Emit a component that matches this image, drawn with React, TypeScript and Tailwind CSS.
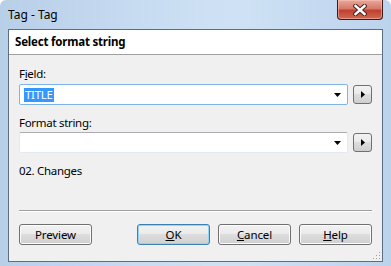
import React from "react";

const font = { fontFamily: '"Noto Sans", "Open Sans", sans-serif' };

function Arrow() {
  return (
    <svg width="7" height="4" viewBox="0 0 7 4">
      <path d="M0 0 H7 L3.5 4 Z" fill="#000" />
    </svg>
  );
}

function Combo({ focused, children }: { focused?: boolean; children?: React.ReactNode }) {
  return (
    <div
      className={
        "flex items-center w-[330px] h-[21px] bg-white border rounded-[2px] " +
        (focused
          ? "border-[#7eb4ea]"
          : "border-[#e3e9ef] border-t-[#abadb3]")
      }
    >
      <div className="flex-1 pl-[4px] flex items-center">{children}</div>
      <div className="w-[17px] flex items-center justify-center pr-[3px]">
        <Arrow />
      </div>
    </div>
  );
}

function SmallBtn() {
  return (
    <div className="w-[19px] h-[19px] border border-[#707070] rounded-[3px] bg-[linear-gradient(#f2f2f2_0%,#ebebeb_45%,#dddddd_50%,#cfcfcf_100%)] flex items-center justify-center">
      <svg width="4" height="7" viewBox="0 0 4 7">
        <path d="M0 0 L4 3.5 L0 7 Z" fill="#000" />
      </svg>
    </div>
  );
}

function Btn({ children, focused }: { children: React.ReactNode; focused?: boolean }) {
  return (
    <div
      className={
        "w-[73px] h-[21px] rounded-[3px] border flex items-center justify-center text-[11.5px] tracking-[-0.1px] text-black bg-[linear-gradient(#f2f2f2_0%,#ebebeb_45%,#dddddd_50%,#cfcfcf_100%)] " +
        (focused
          ? "border-[#3c7fb1] shadow-[inset_0_0_0_1px_#94d4f5]"
          : "border-[#707070] shadow-[inset_0_0_0_1px_#fcfcfc]")
      }
    >
      {children}
    </div>
  );
}

export default function App() {
  return (
    <div
      className="w-[391px] h-[266px] flex flex-col bg-[linear-gradient(90deg,#b8cfe8_0%,#c9ddf2_40%,#cfe2f5_60%,#bcd3ec_100%)] rounded-t-[6px] overflow-hidden"
      style={font}
    >
      <div className="h-[29px] flex items-start justify-between pl-[8px] pr-[8px]">
        <div className="text-[12px] text-black mt-[7px] leading-[16px]">Tag - Tag</div>
        <div className="w-[46px] h-[20px] rounded-b-[4px] border border-t-0 border-[#3b1c18] bg-[linear-gradient(#e9a99a_0%,#d6796a_45%,#c1412f_55%,#cf6a52_100%)] shadow-[inset_0_0_0_1px_rgba(255,200,190,0.5)] flex items-center justify-center">
          <svg width="14" height="12" viewBox="0 0 14 12">
            <path d="M2.5 2 L11.5 10 M11.5 2 L2.5 10" stroke="#4a2520" strokeWidth="4.4" strokeLinecap="square" />
            <path d="M2.5 2 L11.5 10 M11.5 2 L2.5 10" stroke="#fff" strokeWidth="2.4" strokeLinecap="square" />
          </svg>
        </div>
      </div>
      <div className="mx-[8px] mb-[4px] flex-1 border border-[#5d6e82] flex flex-col bg-[#f0f0f0]">
        <div className="h-[25px] bg-white border-b border-[#a0a0a0] flex items-center pl-[6px]">
          <span className="text-[11.5px] tracking-[-0.2px] font-bold text-black">Select format string</span>
        </div>
        <div className="flex flex-col pl-[10px] pr-[10px] text-[11.5px] tracking-[-0.3px] text-black">
          <div className="mt-[11px] leading-[15px] h-[15px]">
            F<span className="underline">i</span>eld:
          </div>
          <div className="mt-[3px] flex items-center gap-[5px]">
            <Combo focused>
              <span className="bg-[#3399ff] text-white leading-[14px] px-[1px]">TITLE</span>
            </Combo>
            <SmallBtn />
          </div>
          <div className="mt-[10px] leading-[15px] h-[15px]">Format string:</div>
          <div className="mt-[2px] flex items-center gap-[5px]">
            <Combo />
            <SmallBtn />
          </div>
          <div className="mt-[10px] leading-[15px] h-[15px]">02. Changes</div>
          <div className="mt-[32px] h-[2px] border-t border-[#a0a0a0] border-b border-b-white" />
          <div className="mt-[12px] flex items-center">
            <Btn>Preview</Btn>
            <div className="flex-1" />
            <div className="flex gap-[8px]">
              <Btn focused>
                <span className="underline">O</span>K
              </Btn>
              <Btn>
                <span className="underline">C</span>ancel
              </Btn>
              <Btn>
                <span className="underline">H</span>elp
              </Btn>
            </div>
          </div>
        </div>
        <div className="flex-1 flex items-end justify-end pr-[1px] pb-[1px]">
          <svg width="9" height="9" viewBox="0 0 9 9">
            <g fill="#a0a0a0">
              <rect x="7" y="1" width="1" height="1" />
              <rect x="4" y="4" width="1" height="1" />
              <rect x="7" y="4" width="1" height="1" />
              <rect x="1" y="7" width="1" height="1" />
              <rect x="4" y="7" width="1" height="1" />
              <rect x="7" y="7" width="1" height="1" />
            </g>
          </svg>
        </div>
      </div>
    </div>
  );
}
